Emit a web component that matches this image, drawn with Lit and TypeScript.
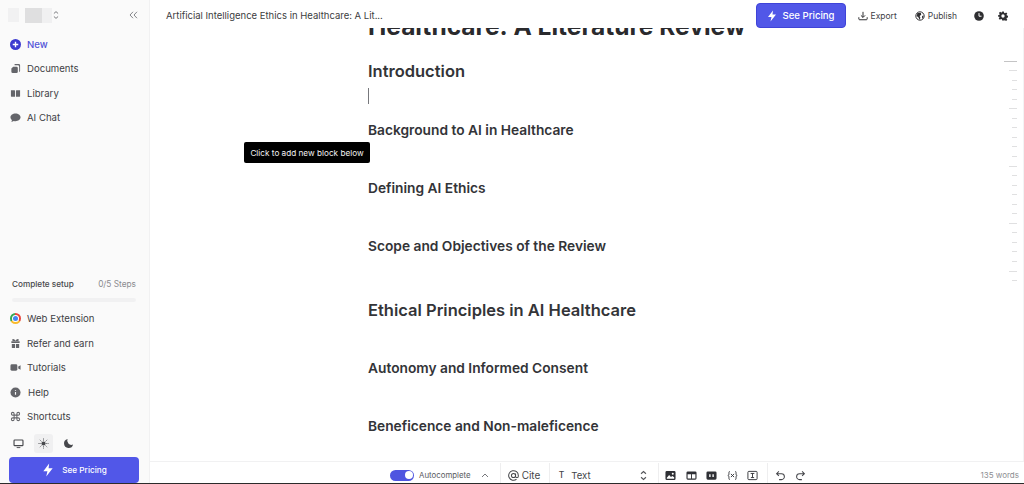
import { LitElement, html, css, svg } from "lit";
import { customElement } from "lit/decorators.js";

const ic = (body: unknown, size = 12, vb = 24) =>
  html`<svg width=${size} height=${size} viewBox="0 0 ${vb} ${vb}" fill="currentColor">${body}</svg>`;

const bolt = svg`<path d="M14 1 4 14h7l-2 9 11-14h-7z"/>`;
const chevUD = html`<svg class="ud" width="7" height="11" viewBox="0 0 8 12" fill="none" stroke="currentColor" stroke-width="1.300"><path d="M1.200 4 4 1.500 6.800 4M1.200 8 4 10.500 6.800 8"/></svg>`;

const icons = {
  plus: svg`<circle cx="12" cy="12" r="12" fill="#3d3bd0"/><path d="M12 6v12M6 12h12" stroke="#fff" stroke-width="3"/>`,
  docs: svg`<path d="M10 2h9a3 3 0 0 1 3 3v12a3 3 0 0 1-2 3V8a3 3 0 0 0-3-3h-7zM7 8h7a3 3 0 0 1 3 3v8a3 3 0 0 1-3 3H6a3 3 0 0 1-3-3v-7z"/>`,
  lib: svg`<path d="M2 5h8a1 1 0 0 1 1 1v13H3a1 1 0 0 1-1-1zM13 6a1 1 0 0 1 1-1h8v13a1 1 0 0 1-1 1h-8z"/>`,
  chat: svg`<path d="M12 3c6 0 11 3.600 11 8.500S18 20 12 20c-1.300 0-2.500-.2-3.600-.5L3 22l1.300-4.500C2.200 16 1 14 1 11.500 1 6.600 6 3 12 3z"/>`,
  gift: svg`<path d="M3 7h18v4H3zM4 13h7v9H5a1 1 0 0 1-1-1zM13 13h7v8a1 1 0 0 1-1 1h-6zM7 2c2 0 4 2 5 4 1-2 3-4 5-4 3 0 3 4 0 4.500H7C4 6 4 2 7 2z"/>`,
  video: svg`<rect x="1" y="5" width="15" height="14" rx="3"/><path d="m18 10 5-3v10l-5-3z"/>`,
  info: svg`<circle cx="12" cy="12" r="11"/><path d="M12 11v6M12 7v1.500" stroke="#fafafa" stroke-width="2.500"/>`,
  cmd: svg`<path fill="none" stroke="currentColor" stroke-width="2.200" d="M9 9h6v6H9zM9 9H6a3 3 0 1 1 3-3zM15 9V6a3 3 0 1 1 3 3zM15 15h3a3 3 0 1 1-3 3zM9 15v3a3 3 0 1 1-3-3z"/>`,
  monitor: svg`<path d="M4 3h16a3 3 0 0 1 3 3v9a3 3 0 0 1-3 3H4a3 3 0 0 1-3-3V6a3 3 0 0 1 3-3zm0 2.500a.7.7 0 0 0-.5.5v9h17V6a.7.7 0 0 0-.5-.5z" fill-rule="evenodd"/><path d="M8 20h8v2H8z"/>`,
  sun: svg`<circle cx="12" cy="12" r="4.500"/><path stroke="currentColor" stroke-width="1.800" stroke-dasharray="2.500 1.200" d="M12 1v5M12 18v5M1 12h5M18 12h5M4 4l3.500 3.500M16.500 16.500 20 20M20 4l-3.500 3.500M7.500 16.500 4 20"/>`,
  moon: svg`<path d="M10 2a10 10 0 1 0 12 12A9 9 0 0 1 10 2z"/>`,
  download: svg`<path fill="none" stroke="currentColor" stroke-width="2.400" d="M12 2v13M7 10.500l5 5 5-5M2 15v4a2 2 0 0 0 2 2h16a2 2 0 0 0 2-2v-4"/>`,
  globe: svg`<circle cx="12" cy="12" r="10" fill="none" stroke="currentColor" stroke-width="2.400"/><path d="M6 5h8l1 4-4 3 2 4-2 5-3-6-4-3zM17 12l3-1v5l-3 2z"/>`,
  clock: svg`<circle cx="12" cy="12" r="11.500"/><path fill="none" stroke="#fff" stroke-width="2.400" d="M12 5v7.500h6"/>`,
  gear: svg`<path fill-rule="evenodd" d="M10 1h4l.7 3.200 2 .9 2.800-1.800 2.800 2.800-1.800 2.800.9 2 3.100.7v4l-3.200.7-.8 2 1.800 2.800-2.800 2.800-2.800-1.800-2 .8L14 23h-4l-.7-3.100-2-.8-2.800 1.800-2.800-2.800 1.800-2.800-.9-2L0 14v-4l3.200-.7.800-2L2.200 4.500 5 1.700l2.800 1.800 2-.8zM12 8a4 4 0 1 0 0 8 4 4 0 0 0 0-8z"/>`,
  image: svg`<path fill-rule="evenodd" d="M4 2h16a3 3 0 0 1 3 3v14a3 3 0 0 1-3 3H4a3 3 0 0 1-3-3V5a3 3 0 0 1 3-3zm13 4a2.200 2.200 0 1 0 0 4.400A2.200 2.200 0 0 0 17 6zM4 17v2h16v-3l-4-3-3 2-4-4z"/>`,
  table: svg`<path fill-rule="evenodd" d="M4 3h16a3 3 0 0 1 3 3v12a3 3 0 0 1-3 3H4a3 3 0 0 1-3-3V6a3 3 0 0 1 3-3zm-.5 6v9.500H11V9zM13 9v9.500h7.500V9z"/>`,
  block: svg`<path fill-rule="evenodd" d="M4 3h16a3 3 0 0 1 3 3v12a3 3 0 0 1-3 3H4a3 3 0 0 1-3-3V6a3 3 0 0 1 3-3zm3 6v6h3V9zm7 0v6h3V9z"/>`,
  vars: svg`<path fill="none" stroke="currentColor" stroke-width="2" d="M6 3C3.500 3 4.500 8 4 10c-.3 1.200-1.500 2-2 2 .5 0 1.700.8 2 2 .5 2-.5 7 2 7M18 3c2.500 0 1.500 5 2 7 .3 1.200 1.500 2 2 2-.5 0-1.700.8-2 2-.5 2 .5 7-2 7M8.500 8.500l7 7M15.500 8.500l-7 7"/>`,
  field: svg`<rect x="2" y="3" width="20" height="18" rx="2" fill="none" stroke="currentColor" stroke-width="2"/><path fill="none" stroke="currentColor" stroke-width="2" d="M8 7.500h8M12 7.500v9M8.500 16.500h7"/>`,
  undo: svg`<path fill="none" stroke="currentColor" stroke-width="2.200" d="M8.500 3 3.500 8l5 5M4 8h10a6 6 0 0 1 0 13H9"/>`,
  redo: svg`<path fill="none" stroke="currentColor" stroke-width="2.200" d="M15.500 3l5 5-5 5M20 8H10a6 6 0 0 0 0 13h5"/>`,
};

const marks = [13, 8, 5, 5, 5, 8, 5, 5, 5, 5, 5, 8, 5, 5, 5, 5, 5, 8, 5, 5, 5, 5, 8, 5];

@customElement("app-root")
export class AppRoot extends LitElement {
  static styles = css`
    :host { display: block; width: 1024px; height: 484px; overflow: hidden; font-family: Inter, "Liberation Sans", sans-serif; color: #3a3a3c; background: #fff; }
    svg { display: block; flex: none; }
    .page { display: flex; height: 483px; border-bottom: 1px solid #2b2b2b; }
    .side { width: 150px; flex: none; box-sizing: border-box; background: #fafafa; border-right: 1px solid #f1f1f2; display: flex; flex-direction: column; padding: 0 0 0 10px; height: 483px; overflow: hidden; }
    .brand { display: flex; align-items: center; height: 30px; margin-bottom: 2px; padding-right: 11px; color: #77787c; }
    .logo { width: 11px; height: 14px; background: #f1f1f2; margin-right: 6px; margin-left: -2px; }
    .blur { width: 17px; height: 15px; background: #dfdfe0; }
    .blur2 { width: 10px; height: 15px; background: #f0f0f1; margin-right: 1px; }
    .brand .ud { width: 6px; height: 10px; }
    .collapse { margin-left: auto; color: #86878b; }
    .item { display: flex; align-items: center; gap: 6px; height: 24.500px; font-size: 9.600px; color: #404145; white-space: nowrap; }
    .item svg { color: #64656a; width: 11px; height: 11px; }
    .new { color: #5153d8; font-weight: 500; }
    .grow { flex: 1; }
    .setup { display: flex; justify-content: space-between; font-size: 8.200px; font-weight: 500; padding: 0 13px 0 2px; line-height: 12px; color: #48494d; }
    .setup span { color: #8a8b8f; font-weight: 400; font-size: 8.300px; }
    .prog { height: 4px; margin: 8px 13px 5px 2px; background: #f1f1f2; border-radius: 2px; }
    .chrome { width: 11px; height: 11px; border-radius: 50%; flex: none; background: conic-gradient(#e8453c 0 33%, #f9bb2d 33% 66%, #34a853 66%); position: relative; }
    .chrome i { position: absolute; inset: 3px; border-radius: 50%; background: #4285f4; box-shadow: 0 0 0 1px #fff; }
    .help { gap: 7px; }
    .themes { display: flex; align-items: center; gap: 6px; margin: 5px 0 4px -1px; color: #47484c; }
    .tb { width: 19px; height: 19px; border-radius: 3px; display: flex; align-items: center; justify-content: center; }
    .tb svg { width: 11px; height: 11px; }
    .tb.on { background: #f0f0f1; }
    .cta { display: flex; align-items: center; justify-content: center; background: #5157e8; color: #fff; font-weight: 500; border-radius: 4px; box-sizing: border-box; }
    .side .cta { width: 130px; height: 26px; margin-left: -1px; gap: 7px; font-size: 8.200px; flex: none; }
    .main { flex: 1; min-width: 0; display: flex; flex-direction: column; position: relative; }
    .head { height: 28px; box-sizing: border-box; flex: none; background: #fff; display: flex; align-items: center; padding: 3px 15px 0 16px; font-size: 8.500px; color: #404145; position: relative; z-index: 1; }
    .title { font-size: 9.500px; flex: 1; white-space: nowrap; color: #3c3d41; }
    .head .cta { width: 90px; height: 25px; border: 1px solid #3f43d8; gap: 4px; font-size: 9.600px; margin-right: 12px; }
    .act { display: flex; align-items: center; gap: 3px; white-space: nowrap; }
    .act svg { width: 10px; height: 10px; color: #2e2e31; }
    .exp { margin-right: 18px; }
    .pub { margin-right: 17px; }
    .head .solo { width: 11px; height: 11px; color: #111; }
    .gear { margin-left: 13px; }
    .doc { flex: 1; min-height: 0; overflow: hidden; padding-left: 218px; color: #333438; position: relative; border-right: 1px solid #f3f3f4; }
    .doc h1, .doc h2, .doc h3 { margin: 0; font-weight: 600; white-space: nowrap; }
    .doc h1 { font-size: 24.500px; line-height: 30px; color: #2a2a2d; margin-top: -17.500px; font-weight: 700; }
    .doc h2 { font-size: 16.500px; line-height: 22px; color: #333438; }
    .doc h3 { font-size: 13.750px; line-height: 18px; }
    .doc .intro { margin-top: 19.500px; }
    .caret { width: 1px; height: 16px; background: #77787c; margin: 6px 0 0; }
    .doc .bg { margin-top: 17px; }
    .doc .h3n { margin-top: 40px; }
    .doc .after { margin-top: 38px; }
    .doc .sec { margin-top: 44px; }
    .mini { position: absolute; right: 6px; top: 32.500px; display: flex; flex-direction: column; align-items: flex-end; gap: 8.550px; }
    .mini i { display: block; height: 1px; background: #e0e0e1; }
    .mini i:first-child { background: #c4c4c5; }
    .tip { position: absolute; left: 94px; top: 114px; width: 126px; height: 21px; background: #000; border-radius: 2px; color: #f2f2f2; font-size: 8.200px; display: flex; align-items: center; justify-content: center; white-space: nowrap; }
    .bar { height: 22px; box-sizing: border-box; flex: none; border-top: 1px solid #f1f1f2; display: flex; align-items: center; padding: 5px 0 0 240px; font-size: 9.500px; color: #45464a; background: #fff; }
    .tog { width: 24px; height: 11px; border-radius: 6px; background: #4f55e0; position: relative; margin-right: 5px; flex: none; }
    .tog::after { content: ""; position: absolute; right: 1.500px; top: 1.500px; width: 8px; height: 8px; border-radius: 50%; background: #fff; }
    .auto { font-size: 7.850px; color: #5a5b5f; }
    .up { margin: 0 11px 0 10px; color: #77787c; }
    .sect { display: flex; align-items: center; align-self: stretch; border-left: 1px solid #eeeeef; box-sizing: border-box; margin-top: -4px; padding-top: 4px; }
    .cite { width: 49px; padding-left: 7px; gap: 3px; font-size: 10px; }
    .text { width: 109px; padding-left: 9px; padding-right: 11px; gap: 7px; font-size: 9.600px; }
    .text b { font-weight: 500; font-size: 8.500px; }
    .text svg { margin-left: auto; color: #55565a; }
    .tools { width: 109px; padding-left: 6.500px; gap: 9.500px; color: #2f3035; }
    .tools svg { width: 11px; height: 11px; }
    .hist { padding-left: 7px; gap: 9px; color: #44454a; }
    .hist svg { width: 11px; height: 11px; }
    .words { margin-left: auto; padding-right: 5px; color: #8d8e92; font-size: 8px; }
  `;

  render() {
    return html`<div class="page">
      <aside class="side">
        <div class="brand"><div class="logo"></div><div class="blur"></div><div class="blur2"></div>${chevUD}
          <div class="collapse"><svg width="9" height="8" viewBox="0 0 9 8" fill="none" stroke="currentColor" stroke-width="1"><path d="M4 .8 1 4l3 3.200M8 .8 5 4l3 3.200"/></svg></div></div>
        <div class="item new">${ic(icons.plus)}<span>New</span></div>
        <div class="item">${ic(icons.docs)}<span>Documents</span></div>
        <div class="item">${ic(icons.lib)}<span>Library</span></div>
        <div class="item">${ic(icons.chat)}<span>AI Chat</span></div>
        <div class="grow"></div>
        <div class="setup">Complete setup<span>0/5 Steps</span></div>
        <div class="prog"></div>
        <div class="item"><div class="chrome"><i></i></div><span>Web Extension</span></div>
        <div class="item">${ic(icons.gift)}<span>Refer and earn</span></div>
        <div class="item">${ic(icons.video)}<span>Tutorials</span></div>
        <div class="item help">${ic(icons.info)}<span>Help</span></div>
        <div class="item">${ic(icons.cmd)}<span>Shortcuts</span></div>
        <div class="themes">
          <div class="tb">${ic(icons.monitor)}</div>
          <div class="tb on">${ic(icons.sun)}</div>
          <div class="tb">${ic(icons.moon)}</div>
        </div>
        <div class="cta">${ic(bolt, 14)}<span>See Pricing</span></div>
      </aside>
      <main class="main">
        <header class="head">
          <div class="title">Artificial Intelligence Ethics in Healthcare: A Lit...</div>
          <div class="cta">${ic(bolt, 12)}<span>See Pricing</span></div>
          <div class="act exp">${ic(icons.download)}<span>Export</span></div>
          <div class="act pub">${ic(icons.globe)}<span>Publish</span></div>
          <div class="act solo">${ic(icons.clock, 11)}</div>
          <div class="act solo gear">${ic(icons.gear, 11)}</div>
        </header>
        <div class="doc">
          <h1>Healthcare: A Literature Review</h1>
          <h2 class="intro">Introduction</h2>
          <div class="caret"></div>
          <h3 class="bg">Background to AI in Healthcare</h3>
          <h3 class="h3n">Defining AI Ethics</h3>
          <h3 class="h3n">Scope and Objectives of the Review</h3>
          <h2 class="sec">Ethical Principles in AI Healthcare</h2>
          <h3 class="after">Autonomy and Informed Consent</h3>
          <h3 class="h3n">Beneficence and Non-maleficence</h3>
          <div class="mini">${marks.map((w) => html`<i style="width:${w}px"></i>`)}</div>
          <div class="tip">Click to add new block below</div>
        </div>
        <footer class="bar">
          <div class="tog"></div><span class="auto">Autocomplete</span>
          <svg class="up" width="8" height="5" viewBox="0 0 8 5" fill="none" stroke="currentColor" stroke-width="1"><path d="M1 4 4 1l3 3"/></svg>
          <div class="sect cite">${ic(svg`<circle cx="12" cy="12" r="4.500" fill="none" stroke="currentColor" stroke-width="2.200"/><path fill="none" stroke="currentColor" stroke-width="2.200" d="M16.500 7.500v6a3 3 0 0 0 6 0V12a10.500 10.500 0 1 0-4 8.200"/>`, 11)}<span>Cite</span></div>
          <div class="sect text"><b>T</b><span>Text</span>${chevUD}</div>
          <div class="sect tools">${ic(icons.image)}${ic(icons.table)}${ic(icons.block)}${ic(icons.vars)}${ic(icons.field)}</div>
          <div class="sect hist">${ic(icons.undo)}${ic(icons.redo)}</div>
          <div class="words">135 words</div>
        </footer>
      </main>
    </div>`;
  }
}
